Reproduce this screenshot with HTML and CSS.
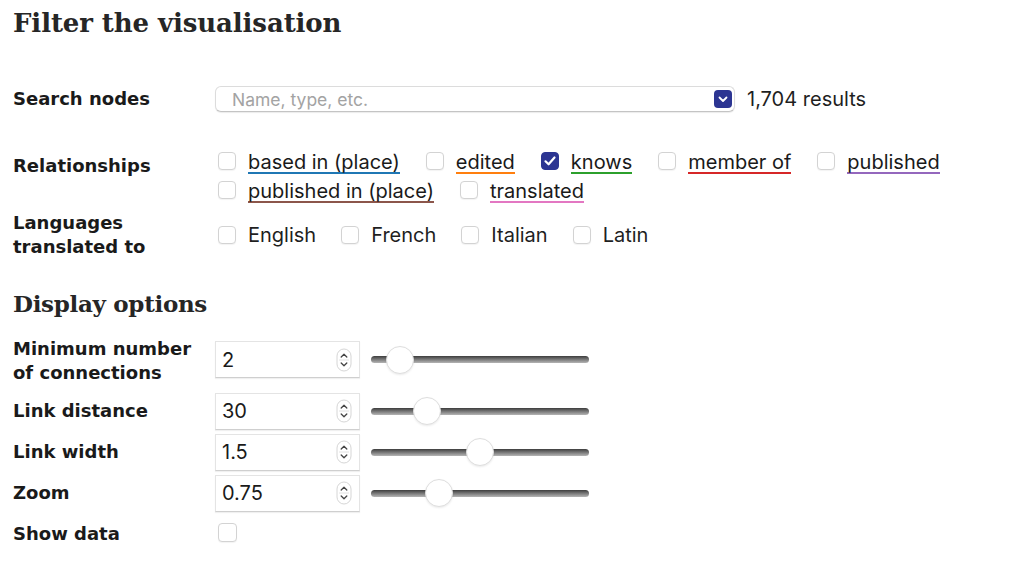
FILE: index.html
```html
<!DOCTYPE html>
<html lang="en">
<head>
<meta charset="utf-8">
<title>Filter the visualisation</title>
<link rel="stylesheet" href="styles.css">
</head>
<body>
<main class="panel">
  <h1 class="title">Filter the visualisation</h1>

  <div class="row row-search">
    <div class="label">Search nodes</div>
    <div class="control search-control">
      <div class="select">
        <input class="select-input" type="text" placeholder="Name, type, etc.">
        <span class="select-btn">
          <svg width="18" height="18" viewBox="0 0 18 18"><rect x="0" y="0" width="18" height="18" rx="4" fill="#2c3592"/><path d="M5.5 7.5 L9 11 L12.5 7.5" fill="none" stroke="#fff" stroke-width="1.8" stroke-linecap="round" stroke-linejoin="round"/></svg>
        </span>
      </div>
      <span class="results">1,704 results</span>
    </div>
  </div>

  <div class="row row-rel">
    <div class="label label-rel">Relationships</div>
    <div class="control checks checks-rel">
      <label class="check"><span class="box"></span><span class="rel rel-blue">based in (place)</span></label>
      <label class="check"><span class="box"></span><span class="rel rel-orange">edited</span></label>
      <label class="check"><span class="box box-on"><svg width="18" height="18" viewBox="0 0 18 18"><path d="M4.5 9.3 L7.6 12.3 L13.5 5.5" fill="none" stroke="#fff" stroke-width="2.2" stroke-linecap="round" stroke-linejoin="round"/></svg></span><span class="rel rel-green">knows</span></label>
      <label class="check"><span class="box"></span><span class="rel rel-red">member of</span></label>
      <label class="check"><span class="box"></span><span class="rel rel-purple">published</span></label>
      <label class="check"><span class="box"></span><span class="rel rel-brown">published in (place)</span></label>
      <label class="check"><span class="box"></span><span class="rel rel-pink">translated</span></label>
    </div>
  </div>

  <div class="row row-lang">
    <div class="label label-lang">Languages<br>translated to</div>
    <div class="control checks checks-lang">
      <label class="check"><span class="box"></span><span class="lang">English</span></label>
      <label class="check"><span class="box"></span><span class="lang">French</span></label>
      <label class="check"><span class="box"></span><span class="lang">Italian</span></label>
      <label class="check"><span class="box"></span><span class="lang">Latin</span></label>
    </div>
  </div>

  <h2 class="subtitle">Display options</h2>

  <div class="opts">
    <div class="row opt-row opt-first">
      <div class="label">Minimum number<br>of connections</div>
      <div class="control opt-control">
        <div class="num"><span class="num-val">2</span><svg class="stepper" width="16" height="24" viewBox="0 0 16 24"><rect x="1" y="1" width="14" height="22" rx="7" fill="#fff" stroke="#d6d6d6"/><line x1="3" y1="12" x2="13" y2="12" stroke="#e2e2e2"/><path d="M5.2 9 L8 6.3 L10.8 9" fill="none" stroke="#444" stroke-width="1.3" stroke-linecap="round" stroke-linejoin="round"/><path d="M5.2 15 L8 17.7 L10.8 15" fill="none" stroke="#444" stroke-width="1.3" stroke-linecap="round" stroke-linejoin="round"/></svg></div>
        <input class="slider" type="range" min="1" max="14" step="1" value="2">
      </div>
    </div>
    <div class="row opt-row opt-second">
      <div class="label">Link distance</div>
      <div class="control opt-control">
        <div class="num"><span class="num-val">30</span><svg class="stepper" width="16" height="24" viewBox="0 0 16 24"><rect x="1" y="1" width="14" height="22" rx="7" fill="#fff" stroke="#d6d6d6"/><line x1="3" y1="12" x2="13" y2="12" stroke="#e2e2e2"/><path d="M5.2 9 L8 6.3 L10.8 9" fill="none" stroke="#444" stroke-width="1.3" stroke-linecap="round" stroke-linejoin="round"/><path d="M5.2 15 L8 17.7 L10.8 15" fill="none" stroke="#444" stroke-width="1.3" stroke-linecap="round" stroke-linejoin="round"/></svg></div>
        <input class="slider" type="range" min="10" max="100" step="1" value="30">
      </div>
    </div>
    <div class="row opt-row">
      <div class="label">Link width</div>
      <div class="control opt-control">
        <div class="num"><span class="num-val">1.5</span><svg class="stepper" width="16" height="24" viewBox="0 0 16 24"><rect x="1" y="1" width="14" height="22" rx="7" fill="#fff" stroke="#d6d6d6"/><line x1="3" y1="12" x2="13" y2="12" stroke="#e2e2e2"/><path d="M5.2 9 L8 6.3 L10.8 9" fill="none" stroke="#444" stroke-width="1.3" stroke-linecap="round" stroke-linejoin="round"/><path d="M5.2 15 L8 17.7 L10.8 15" fill="none" stroke="#444" stroke-width="1.3" stroke-linecap="round" stroke-linejoin="round"/></svg></div>
        <input class="slider" type="range" min="0.5" max="2.5" step="0.1" value="1.5">
      </div>
    </div>
    <div class="row opt-row">
      <div class="label">Zoom</div>
      <div class="control opt-control">
        <div class="num"><span class="num-val">0.75</span><svg class="stepper" width="16" height="24" viewBox="0 0 16 24"><rect x="1" y="1" width="14" height="22" rx="7" fill="#fff" stroke="#d6d6d6"/><line x1="3" y1="12" x2="13" y2="12" stroke="#e2e2e2"/><path d="M5.2 9 L8 6.3 L10.8 9" fill="none" stroke="#444" stroke-width="1.3" stroke-linecap="round" stroke-linejoin="round"/><path d="M5.2 15 L8 17.7 L10.8 15" fill="none" stroke="#444" stroke-width="1.3" stroke-linecap="round" stroke-linejoin="round"/></svg></div>
        <input class="slider" type="range" min="0.25" max="2" step="0.05" value="0.75">
      </div>
    </div>
    <div class="row opt-row opt-show">
      <div class="label">Show data</div>
      <div class="control">
        <label class="check"><span class="box"></span></label>
      </div>
    </div>
  </div>
</main>
</body>
</html>
```

FILE: styles.css
```css
* { box-sizing: border-box; }

html, body {
  margin: 0;
  padding: 0;
  background: #ffffff;
}

body {
  color: #1a1a1a;
  font-family: "Inter", "Noto Sans", sans-serif;
  font-size: 20px;
}

.panel {
  padding: 0 13px;
}

.title {
  margin: 0;
  padding-top: 5px;
  font-family: "DejaVu Serif", "Liberation Serif", serif;
  font-weight: bold;
  font-size: 26px;
  line-height: 36px;
  color: #262626;
  letter-spacing: -0.1px;
}

.subtitle {
  margin: 0;
  margin-top: 30px;
  font-family: "DejaVu Serif", "Liberation Serif", serif;
  font-weight: bold;
  font-size: 23px;
  line-height: 30px;
  color: #262626;
  letter-spacing: -0.3px;
}

.row {
  display: flex;
  align-items: flex-start;
}

.label {
  width: 202px;
  flex: none;
  font-family: "DejaVu Sans", Verdana, sans-serif;
  font-weight: bold;
  font-size: 18px;
  line-height: 24px;
  color: #1a1a1a;
}

.control {
  flex: 1;
  min-width: 0;
}

/* search */
.row-search {
  margin-top: 45px;
  align-items: center;
}

.search-control {
  display: flex;
  align-items: center;
}

.select {
  width: 520px;
  height: 26px;
  display: flex;
  align-items: center;
  border: 1px solid #dcdcdc;
  border-bottom-color: #c4c4c4;
  border-radius: 6px;
  box-shadow: 0 1px 1px rgba(0,0,0,0.08);
  padding: 0 2px 0 16px;
  background: #fff;
}

.select-input {
  flex: 1;
  min-width: 0;
  border: 0;
  outline: 0;
  padding: 0;
  background: transparent;
  font-family: "Inter", "Noto Sans", sans-serif;
  font-size: 17.5px;
  color: #333;
}

.select-input::placeholder {
  color: #a3a3a3;
}

.select-btn {
  display: flex;
  width: 18px;
  height: 18px;
}

.results {
  margin-left: 12px;
  font-size: 20px;
  color: #1f1f1f;
}

/* checkboxes */
.checks {
  display: flex;
  flex-wrap: wrap;
  column-gap: 25px;
  row-gap: 5px;
  padding-left: 3px;
}

.check {
  display: inline-flex;
  align-items: center;
  gap: 12px;
  line-height: 24px;
  height: 24px;
}

.box {
  width: 18px;
  height: 18px;
  flex: none;
  border: 1px solid #d3d3d3;
  border-radius: 4px;
  background: #fff;
  box-shadow: 0 1px 1px rgba(0,0,0,0.05);
  display: flex;
}

.box-on {
  border-color: #2c3592;
  background: #2c3592;
  box-shadow: none;
}

.box-on svg {
  margin: -1px;
}

.rel {
  display: inline-block;
  line-height: 20px;
  padding-top: 1px;
  border-bottom: 2px solid;
  margin-top: 3px;
  color: #1a1a1a;
}

.rel-blue { border-bottom-color: #1f77b4; }
.rel-orange { border-bottom-color: #ff7f0e; }
.rel-green { border-bottom-color: #2ca02c; }
.rel-red { border-bottom-color: #d62728; }
.rel-purple { border-bottom-color: #9467bd; }
.rel-brown { border-bottom-color: #8c564b; }
.rel-pink { border-bottom-color: #e377c2; }

.row-rel {
  margin-top: 37px;
}

.label-rel {
  padding-top: 5px;
}

.checks-rel {
  max-width: 790px;
  column-gap: 26px;
}

.row-lang {
  margin-top: 9px;
}

.checks-lang {
  padding-top: 12px;
}

.lang {
  color: #1f1f1f;
}

/* display options */
.opts {
  margin-top: 15px;
  display: flex;
  flex-direction: column;
  gap: 4px;
}

.opt-row {
  align-items: center;
}

.opt-first .label {
  margin-top: 3px;
}

.opt-second {
  margin-top: 3.5px;
}

.opt-show {
  height: 37px;
}

.opt-control {
  display: flex;
  align-items: center;
  gap: 11px;
}

.num {
  width: 145px;
  height: 37px;
  flex: none;
  display: flex;
  align-items: center;
  justify-content: space-between;
  border: 1px solid #e4e4e4;
  border-bottom-color: #cfcfcf;
  box-shadow: 0 1px 1px rgba(0,0,0,0.06);
  background: #fff;
  padding: 0 7px 0 6px;
}

.num-val {
  font-size: 20px;
  color: #1a1a1a;
}

.stepper {
  display: block;
}

.slider {
  -webkit-appearance: none;
  appearance: none;
  width: 218px;
  height: 30px;
  margin: 0;
  padding: 0;
  background: transparent;
}

.slider::-webkit-slider-runnable-track {
  height: 7px;
  border-radius: 4px;
  background: linear-gradient(to bottom, #3d3d3d 0%, #6e6e6e 40%, #b5b5b5 100%);
}

.slider::-webkit-slider-thumb {
  -webkit-appearance: none;
  appearance: none;
  width: 28px;
  height: 28px;
  margin-top: -10.5px;
  border-radius: 50%;
  background: #fff;
  border: 1px solid #dedede;
  box-shadow: 0 1px 2px rgba(0,0,0,0.08);
}

.opt-show .check {
  padding-left: 3px;
}

.opt-show .box {
  width: 19px;
  height: 19px;
}
```
